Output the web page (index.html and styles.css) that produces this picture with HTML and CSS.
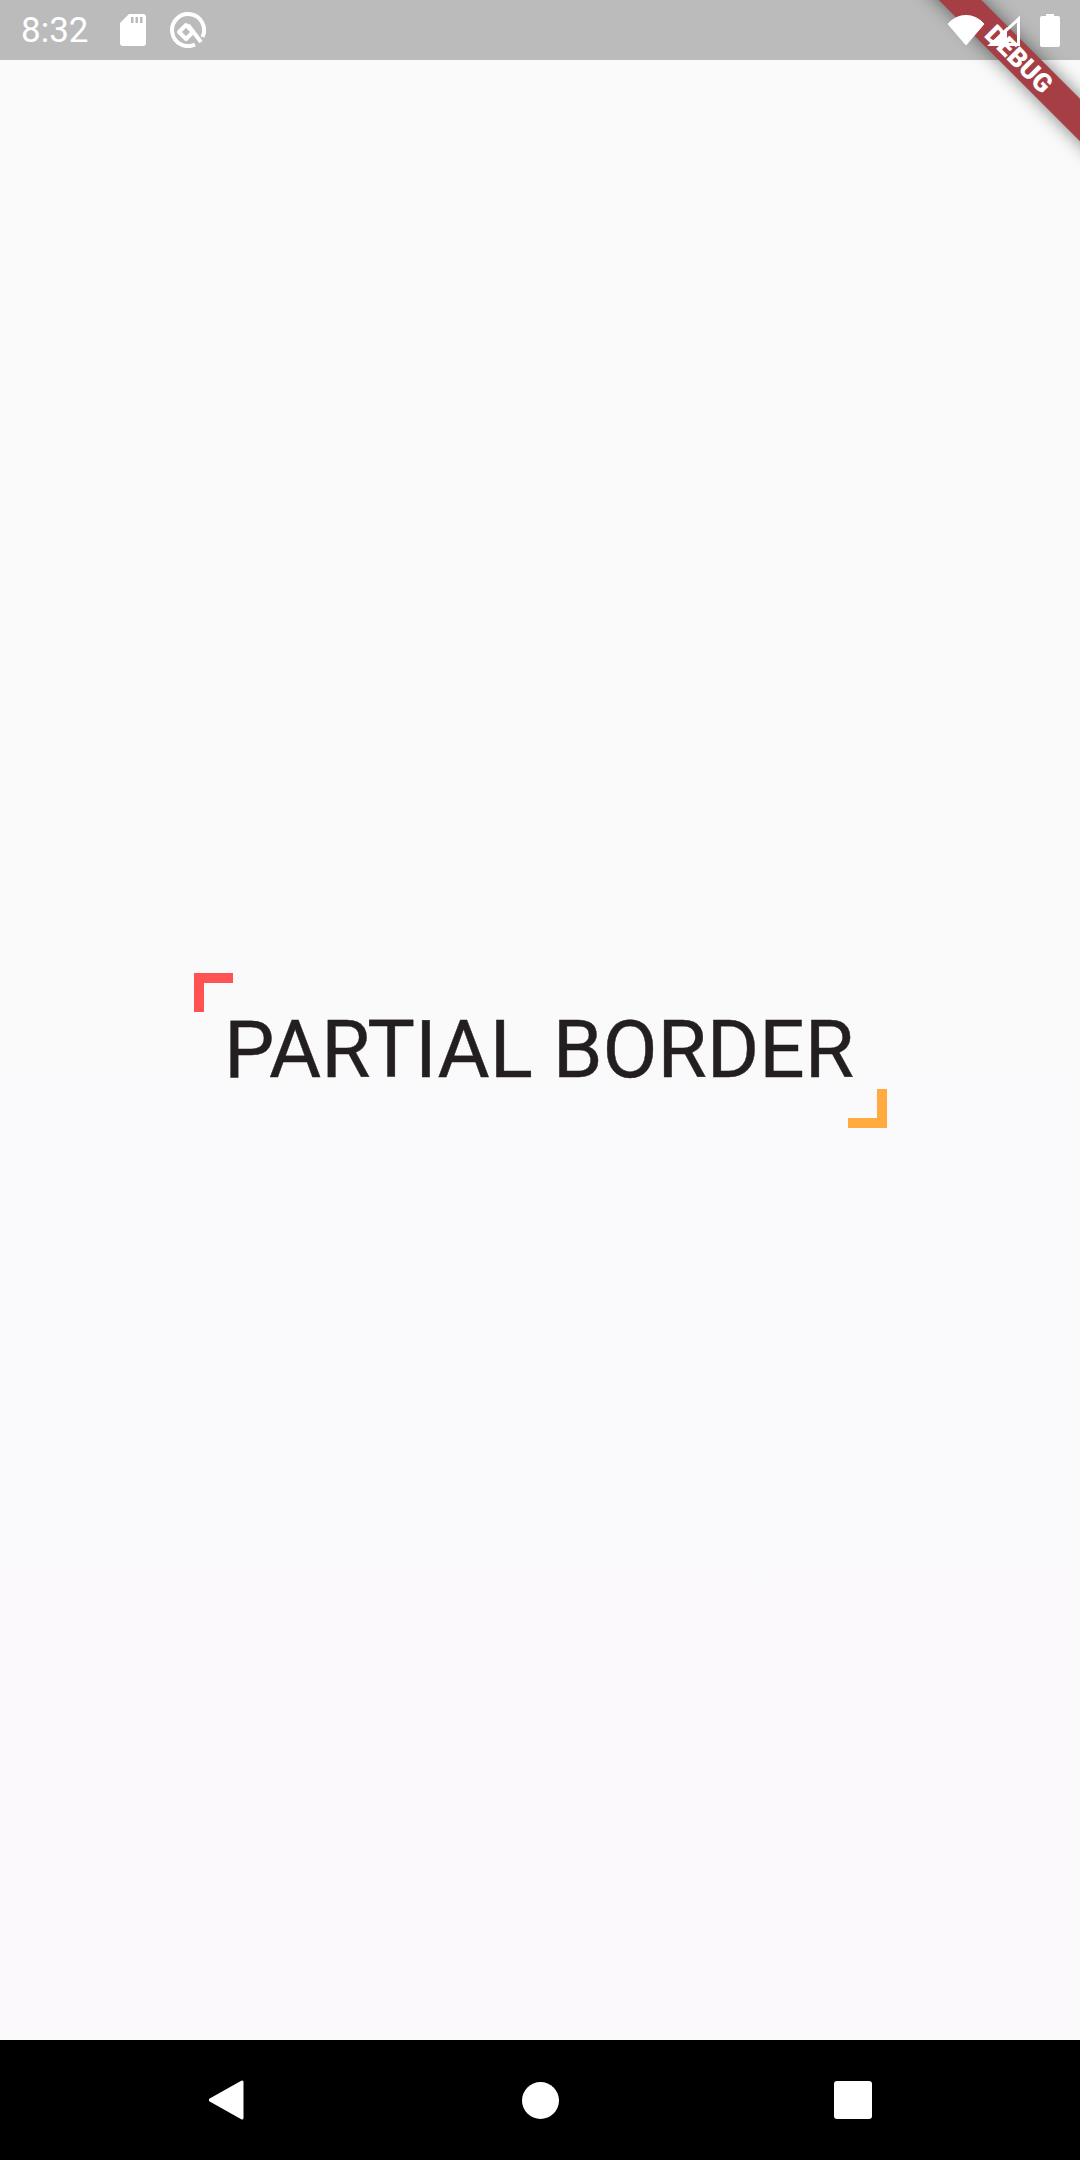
FILE: index.html
```html
<!DOCTYPE html>
<html lang="en">
<head>
    <meta charset="UTF-8">
    <meta name="viewport" content="width=device-width, initial-scale=1.0">
    <title>Partial Border</title>
    <link rel="stylesheet" href="styles.css">
</head>
<body>
<div class="screen">
    <div class="status-bar">
        <div class="status-left">
            <span class="time">8:32</span>
            <svg class="icon-sd" width="26" height="32" viewBox="0 0 26 32">
                <path fill="#fff" d="M9 0H23a3 3 0 0 1 3 3V29a3 3 0 0 1-3 3H3a3 3 0 0 1-3-3V9Z"/>
                <path fill="#bbb" d="M11 3h2.500v6H11ZM15.500 3h2.500v6h-2.500ZM20 3h2.500v6H20Z"/>
            </svg>
            <svg class="icon-q" width="36" height="36" viewBox="0 0 36 36">
                <path fill="none" stroke="#fff" stroke-width="4" d="M25 32.500A16 16 0 1 1 32.500 25"/>
                <path fill="none" stroke="#fff" stroke-width="4" stroke-linejoin="round" d="M16 13 23 20 16 27 9 20Z"/>
                <path stroke="#fff" stroke-width="4" d="M18 13 31 30"/>
            </svg>
        </div>
        <div class="status-right">
            <svg width="38" height="31" viewBox="0 0 38 31">
                <path fill="#fff" stroke="#fff" stroke-width="1" stroke-linejoin="round" d="M19 30 1 9C6 3.500 12 .5 19 .5S32 3.500 37 9Z"/>
            </svg>
            <svg width="33" height="31" viewBox="0 0 33 31">
                <path fill="none" stroke="#fff" stroke-width="3" stroke-linejoin="miter" d="M31.500 4V29.500H4Z"/>
                <path fill="#fff" d="M1 31 20 12V31Z"/>
            </svg>
            <svg class="icon-battery" width="20" height="33" viewBox="0 0 20 33">
                <path fill="#fff" d="M6 0h8v2h4a2 2 0 0 1 2 2V31a2 2 0 0 1-2 2H2a2 2 0 0 1-2-2V4a2 2 0 0 1 2-2h4Z"/>
            </svg>
        </div>
    </div>

    <div class="debug-banner">DEBUG</div>

    <div class="content">
        <div class="partial-border">
            <span class="title">PARTIAL BORDER</span>
        </div>
    </div>

    <div class="nav-bar">
        <svg width="36" height="40" viewBox="0 0 36 40">
            <path fill="#fff" stroke="#fff" stroke-width="3" stroke-linejoin="round" d="M33 2V38L1 20Z"/>
        </svg>
        <span class="nav-home"></span>
        <span class="nav-recent"></span>
    </div>
</div>
</body>
</html>
```

FILE: styles.css
```css
html, body {
    margin: 0;
    padding: 0;
}
body {
    font-family: Roboto, "Liberation Sans", sans-serif;
    background-color: #fafafa;
}
.screen {
    position: relative;
    width: 1080px;
    height: 2160px;
    display: flex;
    flex-direction: column;
    overflow: hidden;
}
.status-bar {
    height: 60px;
    flex: none;
    background-color: #bbb;
    color: white;
    display: flex;
    justify-content: space-between;
    align-items: center;
    padding: 0 20px 0 21px;
}
.status-left {
    display: flex;
    align-items: center;
}
.time {
    font-size: 35px;
    width: 99px;
}
.icon-q {
    margin-left: 24px;
}
.status-right {
    position: relative;
    z-index: 2;
    display: flex;
    align-items: center;
    gap: 2px;
}
.icon-battery {
    margin-left: 18px;
}
.debug-banner {
    position: absolute;
    z-index: 1;
    top: 44px;
    left: 869px;
    width: 300px;
    height: 30px;
    line-height: 30px;
    transform: rotate(45deg);
    background-color: #a53f45;
    box-shadow: 0px 0px 18px rgba(0, 0, 0, 0.5);
    color: white;
    font-size: 26px;
    font-weight: 900;
    text-align: center;
}
.content {
    flex: 1;
    background: linear-gradient(to bottom, #fafafa, #fbf9fc);
    display: flex;
    justify-content: center;
    align-items: center;
}
.partial-border {
    position: relative;
    width: 693px;
    height: 155px;
    display: flex;
    justify-content: center;
    align-items: center;
    padding-right: 2px;
    box-sizing: border-box;
}
.partial-border::before, .partial-border::after {
    content: "";
    position: absolute;
    box-sizing: border-box;
    width: 39px;
    height: 39px;
}
.partial-border::before {
    top: 0;
    left: 0;
    border-top: 10px solid #ff5252;
    border-left: 10px solid #ff5252;
}
.partial-border::after {
    bottom: 0;
    right: 0;
    border-bottom: 10px solid #ffab40;
    border-right: 10px solid #ffab40;
}
.title {
    font-size: 80px;
    color: #231f20;
    -webkit-text-stroke: 0.4px #231f20;
}
.nav-bar {
    height: 120px;
    flex: none;
    background-color: black;
    display: flex;
    justify-content: center;
    align-items: center;
}
.nav-home {
    width: 37px;
    height: 37px;
    margin: 0 275px 0 277px;
    border-radius: 50%;
    background-color: white;
}
.nav-recent {
    width: 38px;
    height: 38px;
    border-radius: 3px;
    background-color: white;
}
```
